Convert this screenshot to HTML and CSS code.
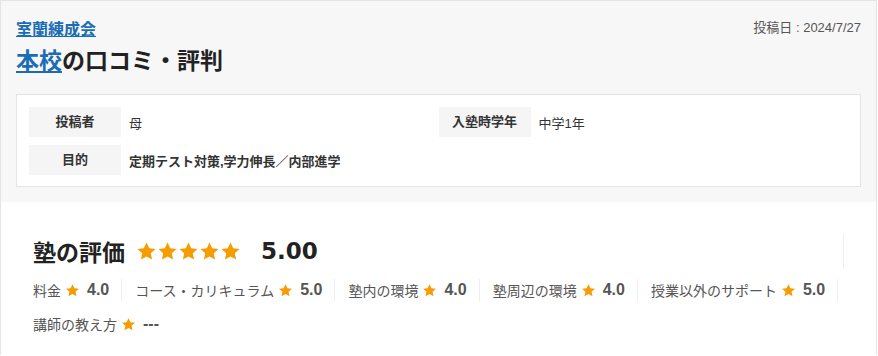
FILE: index.html
```html
<!DOCTYPE html>
<html lang="ja">

<head>
    <meta charset="UTF-8">
    <meta name="viewport" content="width=device-width, initial-scale=1.0">
    <title>本校の口コミ・評判</title>
    <link rel="stylesheet" href="styles.css">
</head>

<body>
    <div class="review">
        <div class="review-head">
            <div class="head-top">
                <a class="school-link" href="#">室蘭練成会</a>
                <span class="post-date">投稿日 : 2024/7/27</span>
            </div>
            <h1 class="review-title"><a href="#">本校</a>の口コミ・評判</h1>

            <div class="info-card">
                <div class="info-row">
                    <div class="info-item">
                        <span class="info-label">投稿者</span>
                        <span class="info-value">母</span>
                    </div>
                    <div class="info-item">
                        <span class="info-label">入塾時学年</span>
                        <span class="info-value">中学1年</span>
                    </div>
                </div>
                <div class="info-row">
                    <div class="info-item wide">
                        <span class="info-label">目的</span>
                        <span class="info-value strong">定期テスト対策,学力伸長／内部進学</span>
                    </div>
                </div>
            </div>
        </div>

        <div class="review-body">
            <div class="total">
                <h2 class="total-title">塾の評価</h2>
                <span class="stars">
                    <svg viewBox="0 0 24 24"><path d="M12 1.8l3.1 6.6 7.2.8-5.4 4.9 1.5 7.1L12 17.6l-6.4 3.6 1.5-7.1-5.4-4.9 7.2-.8z"/></svg>
                    <svg viewBox="0 0 24 24"><path d="M12 1.8l3.1 6.6 7.2.8-5.4 4.9 1.5 7.1L12 17.6l-6.4 3.6 1.5-7.1-5.4-4.9 7.2-.8z"/></svg>
                    <svg viewBox="0 0 24 24"><path d="M12 1.8l3.1 6.6 7.2.8-5.4 4.9 1.5 7.1L12 17.6l-6.4 3.6 1.5-7.1-5.4-4.9 7.2-.8z"/></svg>
                    <svg viewBox="0 0 24 24"><path d="M12 1.8l3.1 6.6 7.2.8-5.4 4.9 1.5 7.1L12 17.6l-6.4 3.6 1.5-7.1-5.4-4.9 7.2-.8z"/></svg>
                    <svg viewBox="0 0 24 24"><path d="M12 1.8l3.1 6.6 7.2.8-5.4 4.9 1.5 7.1L12 17.6l-6.4 3.6 1.5-7.1-5.4-4.9 7.2-.8z"/></svg>
                </span>
                <span class="total-score">5.00</span>
            </div>

            <ul class="scores">
                <li><span>料金</span><svg viewBox="0 0 24 24"><path d="M12 1.8l3.1 6.6 7.2.8-5.4 4.9 1.5 7.1L12 17.6l-6.4 3.6 1.5-7.1-5.4-4.9 7.2-.8z"/></svg><b>4.0</b></li>
                <li><span>コース・カリキュラム</span><svg viewBox="0 0 24 24"><path d="M12 1.8l3.1 6.6 7.2.8-5.4 4.9 1.5 7.1L12 17.6l-6.4 3.6 1.5-7.1-5.4-4.9 7.2-.8z"/></svg><b>5.0</b></li>
                <li><span>塾内の環境</span><svg viewBox="0 0 24 24"><path d="M12 1.8l3.1 6.6 7.2.8-5.4 4.9 1.5 7.1L12 17.6l-6.4 3.6 1.5-7.1-5.4-4.9 7.2-.8z"/></svg><b>4.0</b></li>
                <li><span>塾周辺の環境</span><svg viewBox="0 0 24 24"><path d="M12 1.8l3.1 6.6 7.2.8-5.4 4.9 1.5 7.1L12 17.6l-6.4 3.6 1.5-7.1-5.4-4.9 7.2-.8z"/></svg><b>4.0</b></li>
                <li><span>授業以外のサポート</span><svg viewBox="0 0 24 24"><path d="M12 1.8l3.1 6.6 7.2.8-5.4 4.9 1.5 7.1L12 17.6l-6.4 3.6 1.5-7.1-5.4-4.9 7.2-.8z"/></svg><b>5.0</b></li>
                <li><span>講師の教え方</span><svg viewBox="0 0 24 24"><path d="M12 1.8l3.1 6.6 7.2.8-5.4 4.9 1.5 7.1L12 17.6l-6.4 3.6 1.5-7.1-5.4-4.9 7.2-.8z"/></svg><b>---</b></li>
            </ul>
        </div>
    </div>
</body>

</html>
```

FILE: styles.css
```css
body {
    font-family: 'Liberation Sans', 'Noto Sans CJK JP', sans-serif;
    margin: 0;
    padding: 0;
    background: #ffffff;
    color: #333333;
}

.review {
    border: 1px solid #e4e4e4;
    border-bottom: none;
    margin-right: 1px;
}

.review-head {
    background: #f7f7f7;
    padding: 17px 15px 15px;
}

.head-top {
    display: flex;
    justify-content: space-between;
    align-items: flex-start;
}

.school-link {
    color: #1a6db5;
    font-size: 16px;
    font-weight: bold;
    line-height: 24px;
}

.post-date {
    font-size: 13px;
    color: #555555;
    line-height: 20px;
}

.review-title {
    margin: 4px 0 0;
    font-size: 23px;
    line-height: 30px;
    font-weight: bold;
    color: #222222;
}

.review-title a {
    color: #1a6db5;
}

.info-card {
    margin-top: 18px;
    background: #ffffff;
    border: 1px solid #e4e4e4;
    padding: 12px 12px 11px;
}

.info-row {
    display: flex;
    margin-bottom: 8px;
}

.info-row:last-child {
    margin-bottom: 0;
}

.info-item {
    display: flex;
    align-items: center;
    width: 410px;
}

.info-item.wide {
    width: auto;
}

.info-label {
    width: 92px;
    height: 30px;
    line-height: 30px;
    background: #f5f5f5;
    text-align: center;
    font-size: 13px;
    font-weight: bold;
    color: #333333;
}

.info-value {
    margin-left: 8px;
    font-size: 13px;
    color: #333333;
}

.info-value.strong {
    font-weight: bold;
}

.review-body {
    padding: 32px 32px 20px;
}

.total {
    display: flex;
    align-items: center;
    height: 34px;
    border-right: 1px solid #eeeeee;
    width: 810px;
}

.total-title {
    margin: 0;
    font-size: 23px;
    font-weight: bold;
    color: #222222;
}

.stars {
    display: flex;
    margin-left: 11px;
}

.stars svg {
    width: 21px;
    height: 21px;
    fill: #f59c00;
}

.total-score {
    margin-left: 20px;
    font-family: 'DejaVu Sans', sans-serif;
    font-size: 23px;
    font-weight: bold;
    color: #222222;
}

.scores {
    list-style: none;
    margin: 11px 0 0;
    padding: 0;
    display: flex;
    flex-wrap: wrap;
    row-gap: 12px;
    width: 830px;
}

.scores li {
    display: flex;
    align-items: center;
    height: 22px;
    padding-right: 12px;
    margin-right: 13px;
    border-right: 1px solid #eeeeee;
    font-size: 14px;
    color: #555555;
}

.scores li:last-child {
    border-right: none;
}

.scores svg {
    width: 15px;
    height: 15px;
    fill: #f59c00;
    margin: 0 7px 0 4px;
}

.scores b {
    font-size: 16px;
    color: #555555;
}
```
